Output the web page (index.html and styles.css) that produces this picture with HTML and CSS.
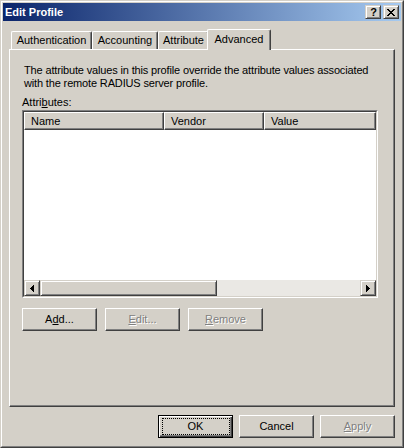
FILE: index.html
```html
<!DOCTYPE html>
<html>
<head>
<meta charset="utf-8">
<title>Edit Profile</title>
<link rel="stylesheet" href="styles.css">
</head>
<body>
<div class="window">
  <div class="frame">
    <div class="titlebar">
      <span class="title">Edit Profile</span>
      <div class="caption-btns">
        <span class="cbtn help">?</span>
        <span class="cbtn close">
          <svg width="8" height="7" viewBox="0 0 8 7" shape-rendering="crispEdges">
            <path d="M0 0h2v1h-2zM6 0h2v1h-2zM1 1h2v1h-2zM5 1h2v1h-2zM2 2h4v1h-4zM3 3h2v1h-2zM2 4h4v1h-4zM1 5h2v1h-2zM5 5h2v1h-2zM0 6h2v1h-2zM6 6h2v1h-2z" fill="#000"/>
          </svg>
        </span>
      </div>
    </div>
    <div class="content">
      <div class="tabs">
        <div class="tab t-auth">Authentication</div>
        <div class="tab t-acct">Accounting</div>
        <div class="tab t-attr">Attribute</div>
        <div class="tab sel t-adv">Advanced</div>
      </div>
      <div class="panel">
        <p class="desc">The attribute values in this profile override the attribute values associated<br>with the remote RADIUS server profile.</p>
        <div class="label">Attri<u>b</u>utes:</div>
        <div class="list">
          <div class="list-inner">
            <div class="header">
              <div class="col c-name">Name</div>
              <div class="col c-vendor">Vendor</div>
              <div class="col c-value">Value</div>
            </div>
            <div class="rows"></div>
            <div class="hscroll">
              <div class="sb-btn">
                <svg width="4" height="7" viewBox="0 0 4 7" shape-rendering="crispEdges"><path d="M3 0h1v7h-1zM2 1h1v5h-1zM1 2h1v3h-1zM0 3h1v1h-1z" fill="#000"/></svg>
              </div>
              <div class="thumb"></div>
              <div class="track"></div>
              <div class="sb-btn">
                <svg width="4" height="7" viewBox="0 0 4 7" shape-rendering="crispEdges"><path d="M0 0h1v7h-1zM1 1h1v5h-1zM2 2h1v3h-1zM3 3h1v1h-1z" fill="#000"/></svg>
              </div>
            </div>
          </div>
        </div>
        <div class="btn-row">
          <div class="btn">A<u>d</u>d...</div>
          <div class="btn disabled"><u>E</u>dit...</div>
          <div class="btn disabled"><u>R</u>emove</div>
        </div>
      </div>
      <div class="dlg-btns">
        <div class="btn default">OK</div>
        <div class="btn">Cancel</div>
        <div class="btn disabled"><u>A</u>pply</div>
      </div>
    </div>
  </div>
</div>
</body>
</html>
```

FILE: styles.css
```css
* { box-sizing: border-box; }
html, body {
  margin: 0;
  padding: 0;
  background: #d4d0c8;
}
body {
  font-family: "Liberation Sans", Arial, sans-serif;
  font-size: 11px;
  color: #000;
  width: 404px;
  height: 448px;
  overflow: hidden;
}
.window {
  width: 404px;
  height: 448px;
  border: 1px solid;
  border-color: #d4d0c8 #404040 #404040 #d4d0c8;
}
.frame {
  height: 100%;
  border: 1px solid;
  border-color: #fff #808080 #808080 #fff;
  padding: 1px;
  display: flex;
  flex-direction: column;
}
.titlebar {
  height: 18px;
  background: linear-gradient(to right, #0a246a, #a6caf0);
  display: flex;
  align-items: center;
  justify-content: space-between;
  padding: 0 2px 0 2px;
}
.title {
  color: #fff;
  font-weight: bold;
  font-size: 11px;
  line-height: 13px;
}
.caption-btns {
  display: flex;
  gap: 2px;
}
.cbtn {
  width: 16px;
  height: 14px;
  background: #d4d0c8;
  border: 1px solid;
  border-color: #d4d0c8 #404040 #404040 #d4d0c8;
  box-shadow: inset 1px 1px #fff, inset -1px -1px #808080;
  display: flex;
  align-items: center;
  justify-content: center;
}
.cbtn.help {
  font-weight: bold;
  font-size: 11px;
  line-height: 12px;
  padding-left: 1px;
}
.cbtn.close svg { display: block; margin-left: 0; }
.content {
  flex: 1;
  display: flex;
  flex-direction: column;
  padding: 0 6px;
}
.tabs {
  margin-top: 8px;
  height: 20px;
  display: flex;
  align-items: flex-end;
  padding-left: 2px;
}
.tab {
  height: 18px;
  border-top: 1px solid #fff;
  border-left: 1px solid #fff;
  border-right: 1px solid #404040;
  box-shadow: inset -1px 0 #808080;
  border-radius: 2px 2px 0 0;
  padding-top: 2px;
  line-height: 13px;
  text-align: center;
  white-space: nowrap;
  background: #d4d0c8;
}
.t-auth { width: 81px; }
.t-acct { width: 66px; }
.t-attr { width: 51px; }
.tab.sel {
  width: 64px;
  height: 21px;
  margin: 0 -2px -1px -2px;
  position: relative;
  z-index: 1;
  padding-top: 3px;
}
.panel {
  height: 358px;
  border: 1px solid;
  border-color: #fff #404040 #404040 #fff;
  box-shadow: inset -1px -1px #808080;
  padding: 14px 12px 0 12px;
}
.desc {
  margin: 0 0 0 2px;
  line-height: 13px;
  white-space: nowrap;
  letter-spacing: -0.15px;
}
.label {
  margin-top: 6px;
  line-height: 13px;
}
.list {
  margin-top: 1px;
  width: 356px;
  height: 188px;
  border: 1px solid;
  border-color: #808080 #fff #fff #808080;
}
.list-inner {
  height: 100%;
  border: 1px solid;
  border-color: #404040 #d4d0c8 #d4d0c8 #404040;
  background: #fff;
  display: flex;
  flex-direction: column;
}
.header {
  height: 18px;
  display: flex;
  background: #d4d0c8;
}
.col {
  height: 18px;
  border: 1px solid;
  border-color: #fff #404040 #404040 #fff;
  box-shadow: inset -1px -1px #808080;
  padding: 2px 0 0 6px;
  line-height: 13px;
}
.c-name { width: 140px; }
.c-vendor { width: 100px; }
.c-value { flex: 1; }
.rows { flex: 1; background: #fff; }
.hscroll {
  height: 16px;
  display: flex;
  background: #d4d0c8;
}
.sb-btn, .thumb {
  height: 16px;
  border: 1px solid;
  border-color: #d4d0c8 #404040 #404040 #d4d0c8;
  box-shadow: inset 1px 1px #fff, inset -1px -1px #808080;
  background: #d4d0c8;
}
.sb-btn {
  width: 16px;
  display: flex;
  align-items: center;
  justify-content: center;
}
.sb-btn svg { display: block; }
.thumb { width: 177px; }
.track {
  flex: 1;
  background: #eae8e4;
}
.btn-row {
  margin-top: 10px;
  display: flex;
  gap: 8px;
}
.btn {
  width: 75px;
  height: 23px;
  border: 1px solid;
  border-color: #fff #404040 #404040 #fff;
  box-shadow: inset -1px -1px #808080;
  background: #d4d0c8;
  display: flex;
  align-items: center;
  justify-content: center;
  line-height: 13px;
  white-space: nowrap;
}
.btn u { text-underline-offset: 1px; }
.btn.disabled {
  color: #808080;
  text-shadow: 1px 1px 0 #fff;
}
.btn.default {
  border-color: #000;
  box-shadow: inset 1px 1px #fff, inset -1px -1px #404040, inset -2px -2px #808080;
  position: relative;
}
.btn.default::after {
  content: "";
  position: absolute;
  left: 3px;
  top: 2px;
  right: 2px;
  bottom: 2px;
  border: 1px dotted #000;
}
.dlg-btns {
  margin-top: 8px;
  display: flex;
  justify-content: flex-end;
  gap: 6px;
}
```
